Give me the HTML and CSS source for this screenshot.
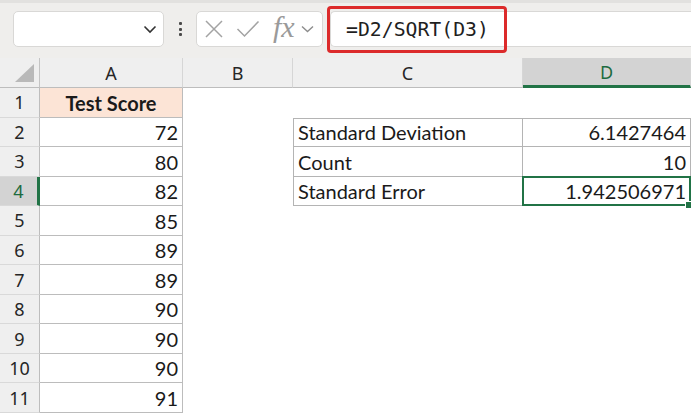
FILE: index.html
```html
<!DOCTYPE html>
<html lang="en">
<head>
    <meta charset="UTF-8">
    <title>Standard Error</title>
    <link rel="stylesheet" href="styles.css">
</head>
<body>
    <!-- Formula bar -->
    <div class="toolbar">
        <div class="namebox">
            <svg class="chev" width="14" height="9" viewBox="0 0 14 9"><path d="M1.5 1.5 L7 7 L12.5 1.5" fill="none" stroke="#333" stroke-width="1.6"/></svg>
        </div>
        <div class="dots"><span></span><span></span><span></span></div>
        <div class="fnbox">
            <svg width="20" height="20" viewBox="0 0 20 20"><path d="M2 2 L18 18 M18 2 L2 18" stroke="#a3a3a3" stroke-width="1.5" fill="none"/></svg>
            <svg width="24" height="20" viewBox="0 0 24 20"><path d="M1.5 10 L8.5 17 L22.5 2.5" stroke="#a3a3a3" stroke-width="1.5" fill="none"/></svg>
            <span class="fx">fx</span>
            <svg width="13" height="8" viewBox="0 0 13 8"><path d="M1 1.5 L6.5 6.5 L12 1.5" fill="none" stroke="#8c8c8c" stroke-width="1.4"/></svg>
        </div>
        <div class="formula">
            <span class="formula-text">=D2/SQRT(D3)</span>
            <div class="highlight"></div>
        </div>
    </div>

    <!-- Sheet -->
    <div class="sheet">
        <div class="corner"><svg width="40" height="30" viewBox="0 0 40 30"><polygon points="16,25 35,25 35,7" fill="#b9b9b9"/></svg></div>
        <div class="colhead">A</div>
        <div class="colhead">B</div>
        <div class="colhead">C</div>
        <div class="colhead active">D</div>

        <div class="rowhead">1</div>
        <div class="cell a head">Test Score</div>
        <div class="cell"></div><div class="cell"></div><div class="cell"></div>

        <div class="rowhead">2</div>
        <div class="cell a num">72</div>
        <div class="cell"></div>
        <div class="cell label top">Standard Deviation</div>
        <div class="cell value top">6.1427464</div>

        <div class="rowhead">3</div>
        <div class="cell a num">80</div>
        <div class="cell"></div>
        <div class="cell label">Count</div>
        <div class="cell value">10</div>

        <div class="rowhead active">4</div>
        <div class="cell a num">82</div>
        <div class="cell"></div>
        <div class="cell label">Standard Error</div>
        <div class="cell value selected">1.942506971<span class="handle"></span></div>

        <div class="rowhead">5</div>
        <div class="cell a num">85</div>
        <div class="cell"></div><div class="cell"></div><div class="cell"></div>

        <div class="rowhead">6</div>
        <div class="cell a num">89</div>
        <div class="cell"></div><div class="cell"></div><div class="cell"></div>

        <div class="rowhead">7</div>
        <div class="cell a num">89</div>
        <div class="cell"></div><div class="cell"></div><div class="cell"></div>

        <div class="rowhead">8</div>
        <div class="cell a num">90</div>
        <div class="cell"></div><div class="cell"></div><div class="cell"></div>

        <div class="rowhead">9</div>
        <div class="cell a num">90</div>
        <div class="cell"></div><div class="cell"></div><div class="cell"></div>

        <div class="rowhead">10</div>
        <div class="cell a num">90</div>
        <div class="cell"></div><div class="cell"></div><div class="cell"></div>

        <div class="rowhead">11</div>
        <div class="cell a num">91</div>
        <div class="cell"></div><div class="cell"></div><div class="cell"></div>
    </div>
</body>
</html>
```

FILE: styles.css
```css
/* Page */
body {
    margin: 0;
    width: 691px;
    height: 414px;
    overflow: hidden;
    background: #ffffff;
    font-family: Lato, "Noto Sans", sans-serif;
    color: #1a1a1a;
}

/* Formula bar */
.toolbar {
    height: 58px;
    box-sizing: border-box;
    padding: 8px 0 0 13px;
    display: flex;
    align-items: flex-start;
    background: #efeeec;
    border-top: 3px solid #e2e1df;
}

.namebox {
    width: 151px;
    height: 36px;
    box-sizing: border-box;
    background: #fff;
    border: 1px solid #d9d8d6;
    border-radius: 5px;
    display: flex;
    align-items: center;
    justify-content: flex-end;
    padding-right: 6px;
}

.dots {
    width: 32px;
    height: 36px;
    display: flex;
    flex-direction: column;
    align-items: center;
    justify-content: center;
    gap: 2.5px;
}

.dots span {
    width: 3px;
    height: 3px;
    background: #4a4a4a;
    border-radius: 1px;
}

.fnbox {
    width: 127px;
    height: 36px;
    box-sizing: border-box;
    background: #fff;
    border: 1px solid #d9d8d6;
    border-radius: 5px;
    display: flex;
    align-items: center;
    padding-left: 7px;
    gap: 12px;
}

.fnbox .fx {
    font-family: "Liberation Serif", serif;
    font-style: italic;
    font-size: 30px;
    line-height: 1;
    color: #9a9a9a;
    margin-left: 1px;
    margin-right: -6px;
    margin-top: -4px;
}

.formula {
    position: relative;
    flex: 1;
    height: 36px;
    margin-left: 7px;
    box-sizing: border-box;
    background: #fff;
    border: 1px solid #d9d8d6;
    border-right: none;
    border-radius: 5px 0 0 5px;
    display: flex;
    align-items: center;
    padding-left: 15px;
}

.formula-text {
    font-family: "DejaVu Sans Mono", monospace;
    font-size: 19.8px;
    color: #1f1f1f;
}

.highlight {
    position: absolute;
    left: -4px;
    top: -6px;
    width: 180px;
    height: 47px;
    box-sizing: border-box;
    border: 3px solid #dc2a2a;
    border-radius: 4px;
}

/* Sheet grid */
.sheet {
    display: grid;
    grid-template-columns: 40px 143px 110px 230px 168px;
    grid-template-rows: 30px repeat(11, 29.55px);
    font-size: 20px;
}

.corner {
    background: #efefef;
    border-right: 1px solid #c4c4c4;
    border-bottom: 1px solid #bdbdbd;
}

.corner svg {
    display: block;
    margin: -1px 0 0 -1px;
}

.colhead {
    background: #efefef;
    border-right: 1px solid #d6d6d6;
    border-bottom: 1px solid #bdbdbd;
    display: flex;
    align-items: center;
    justify-content: center;
    color: #262626;
    font-family: "Noto Sans", sans-serif;
    font-size: 18px;
}

.colhead.active {
    background: #d3d3d3;
    color: #1d6b40;
    border-bottom: 3px solid #217346;
}

.rowhead {
    background: #efefef;
    border-right: 1px solid #bdbdbd;
    border-bottom: 1px solid #d9d9d9;
    display: flex;
    align-items: center;
    justify-content: center;
    color: #262626;
    font-family: "Noto Sans", sans-serif;
    font-size: 18px;
}

.rowhead.active {
    background: #d3d3d3;
    color: #1d6b40;
    border-right: 3px solid #217346;
}

.cell {
    position: relative;
    display: flex;
    align-items: flex-end;
    padding: 0 4px 2px 4px;
    box-sizing: border-box;
    white-space: nowrap;
}

.cell.a {
    border-right: 1px solid #bcbcbc;
    border-bottom: 1px solid #bcbcbc;
}

.cell.head {
    background: #fce4d6;
    font-weight: bold;
    justify-content: center;
}

.num, .value {
    justify-content: flex-end;
}

.label {
    border-left: 1px solid #b4b4b4;
    border-right: 1px solid #b4b4b4;
    border-bottom: 1px solid #b4b4b4;
}

.value {
    border-right: 1px solid #b4b4b4;
    border-bottom: 1px solid #b4b4b4;
}

.top {
    border-top: 1px solid #b4b4b4;
}

.selected {
    border: 2px solid #217346;
    margin: -1px 0 0 -1px;
    padding-right: 3px;
    padding-bottom: 1px;
}

.handle {
    position: absolute;
    right: -4px;
    bottom: -5px;
    width: 6px;
    height: 6px;
    background: #217346;
    border: 1px solid #fff;
}
```
